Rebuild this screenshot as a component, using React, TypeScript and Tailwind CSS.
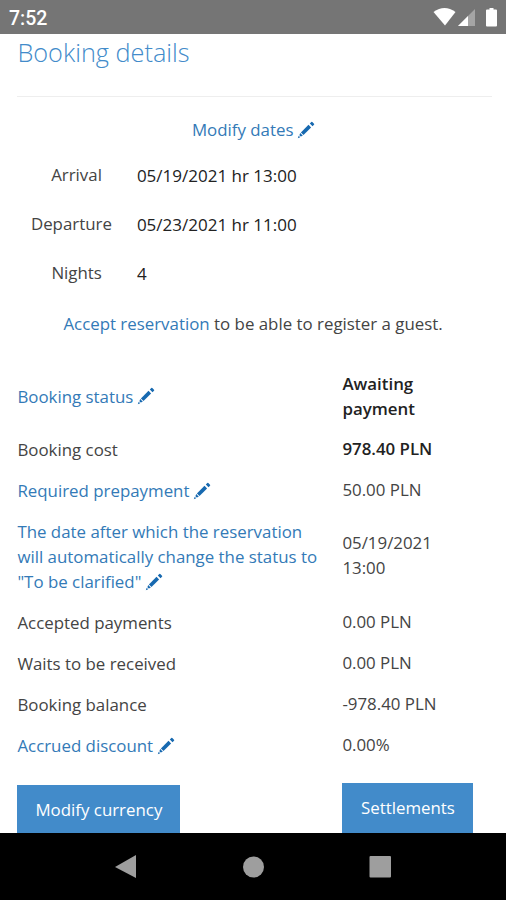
import type { ReactNode } from "react";

const Pencil = () => (
  <svg viewBox="0 0 18 18" className="ml-1 inline-block h-[18px] w-[18px] align-[-2.500px]" fill="#1769b0">
    <path d="M3.900 11.400 11.500 3.800 14.100 6.400 6.500 14z" />
    <path d="M12.800 2.500 14.300 1q.5-.5 1 0L17 2.700q.5.5 0 1L15.500 5.200z" />
    <path d="M3.200 12.100 5.800 14.700 3.700 15.500 2.400 14.200zM1.700 14.700 3.200 16.200.8 17.200z" />
  </svg>
);

type Row = {
  label: ReactNode;
  value: ReactNode;
  editable?: boolean;
  bold?: boolean;
  height: string;
  valueClass?: string;
};

const ROWS: Row[] = [
  { label: "Booking status", value: <>Awaiting<br />payment</>, editable: true, bold: true, height: "h-[66px]", valueClass: "pb-0" },
  { label: "Booking cost", value: "978.40 PLN", bold: true, height: "h-[41px]" },
  { label: "Required prepayment", value: "50.00 PLN", editable: true, height: "h-[41px]" },
  {
    label: <>The date after which the reservation<br />will automatically change the status to<br />"To be clarified"</>,
    value: <>05/19/2021<br />13:00</>,
    editable: true,
    height: "h-[91px]",
    valueClass: "pb-[3px]",
  },
  { label: "Accepted payments", value: "0.00 PLN", height: "h-[41px]" },
  { label: "Waits to be received", value: "0.00 PLN", height: "h-[41px]" },
  { label: "Booking balance", value: "-978.40 PLN", height: "h-[41px]" },
  { label: "Accrued discount", value: "0.00%", editable: true, height: "h-[41px]" },
];

const DATES = [
  { label: "Arrival", value: "05/19/2021 hr 13:00", padding: "pr-[35px]" },
  { label: "Departure", value: "05/23/2021 hr 11:00", padding: "pr-[25px]" },
  { label: "Nights", value: "4", padding: "pr-[35px]" },
];

const StatusBar = () => (
  <header className="flex h-[34px] shrink-0 items-center justify-between bg-[#757575] pl-[9px] pr-[7px] font-['Roboto',sans-serif] text-white">
    <span className="pt-0.5 text-[19.500px] font-medium">7:52</span>
    <svg width="72" height="34" viewBox="0 0 72 34" fill="#fff">
      <path d="M6.500 12Q17.500 4 28.500 12L18 25.500z" />
      <path d="M48 9v17H31z" opacity=".35" />
      <path d="M41 16v10H31z" />
      <path d="M60 9.500h2.500V8h4v1.500H69q1 0 1 1v15q0 1-1 1h-9q-1 0-1-1v-15q0-1 1-1z" />
    </svg>
  </header>
);

const NavBar = () => (
  <nav className="h-[67px] shrink-0 bg-black">
    <svg width="506" height="67" viewBox="0 0 506 67" fill="#9e9e9e">
      <path d="M115 34 136 22v23z" />
      <circle cx="253.500" cy="34" r="10.500" />
      <rect x="369.500" y="23" width="21.500" height="21.500" rx="1" />
    </svg>
  </nav>
);

const App = () => {
  return (
    <div className="flex h-[900px] w-[506px] flex-col overflow-hidden bg-white font-['Open_Sans',sans-serif] text-[16.870px] leading-[25px] text-[#444]">
      <StatusBar />
      <main className="min-h-0 flex-1 overflow-hidden pl-[17.400px] pr-[14px]">
        <h1 className="h-[63px] border-b border-[#eee] pt-[2px] text-[25.300px] font-light leading-8 text-[#428bca]">
          Booking details
        </h1>
        <section>
          <a className="mt-[20px] flex h-[25px] items-center justify-center pr-[2px] text-[#337ab7]">
            Modify dates <Pencil />
          </a>
          <div className="mt-[9px]">
            {DATES.map(({ label, value, padding }) => (
              <div key={label} className="flex h-[49px] items-center">
                <span className={`w-[119.500px] pb-0.5 text-right ${padding}`}>{label}</span>
                <span className="text-[17px] font-medium text-[#222]">{value}</span>
              </div>
            ))}
          </div>
          <p className="mt-[13px] pl-[46px]">
            <a className="text-[#337ab7]">Accept reservation</a> to be able to register a guest.
          </p>
        </section>
        <section className="mt-[27px]">
          {ROWS.map(({ label, value, editable, bold, height, valueClass = "pb-0.5" }, index) => (
            <div key={index} className={`flex items-center ${height}`}>
              <div className={`w-[325px] whitespace-nowrap ${editable ? "text-[#337ab7]" : ""}`}>
                {label}
                {editable && <Pencil />}
              </div>
              <div className={`${valueClass} ${bold ? "font-semibold text-[#222]" : ""}`}>{value}</div>
            </div>
          ))}
        </section>
        <div className="mt-[17px] flex items-start">
          <button className="mt-0.5 h-[49px] w-[163px] bg-[#428bca] pb-px text-white">Modify currency</button>
          <button className="ml-[162px] h-[51px] w-[131px] bg-[#428bca] pb-0.5 text-white">Settlements</button>
        </div>
      </main>
      <NavBar />
    </div>
  );
};

export default App;
